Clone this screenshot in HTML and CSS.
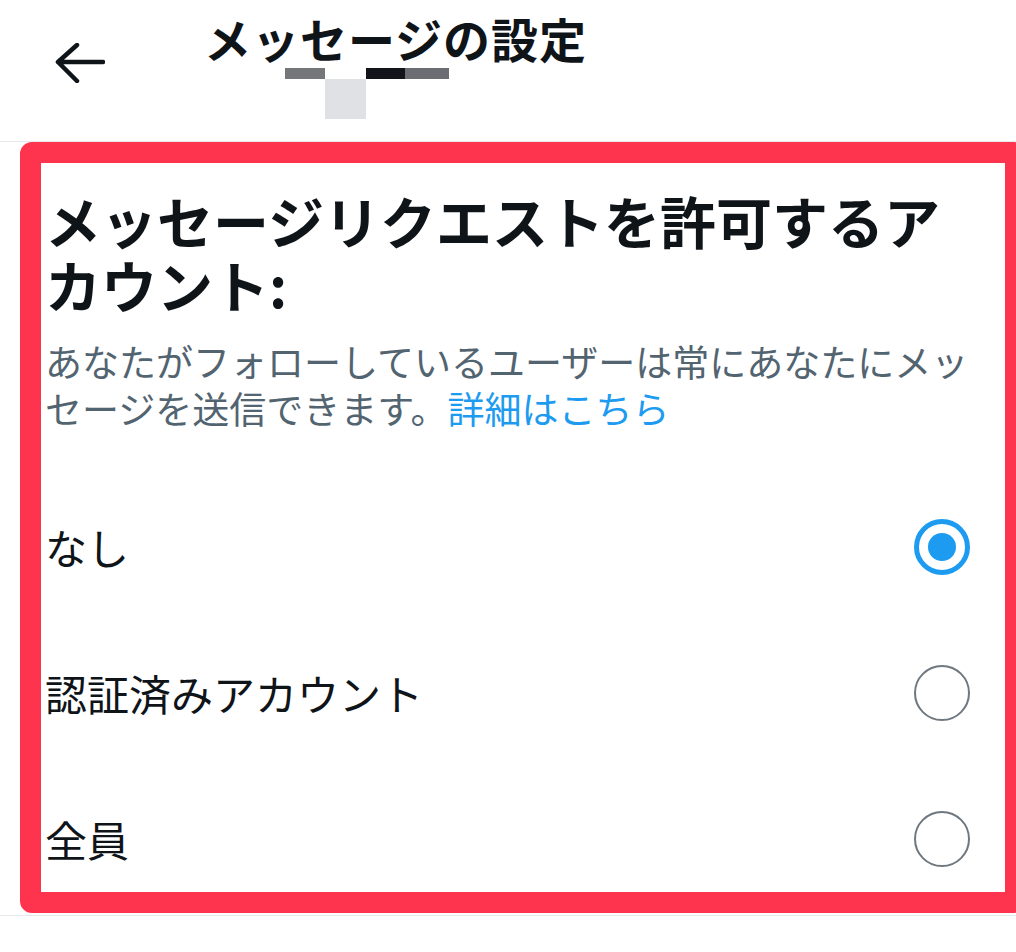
FILE: index.html
```html
<!DOCTYPE html>
<html lang="ja">
<head>
<meta charset="utf-8">
<title>メッセージの設定</title>
<link rel="stylesheet" href="styles.css">
</head>
<body>
<header class="topbar">
  <button class="back" aria-label="戻る">
    <svg width="50" height="40" viewBox="0 0 50 40"><path d="M3 19 H48 M22 2 L3 19 L22 38" fill="none" stroke="#0f1419" stroke-width="4.5" stroke-linecap="round" stroke-linejoin="round"/></svg>
  </button>
  <div class="title-wrap">
    <h1 class="title">メッセージの設定</h1>
    <div class="glitch">
      <span class="g g1"></span>
      <span class="g g2"></span>
      <span class="g g3"></span>
      <span class="g g4"></span>
    </div>
  </div>
</header>
<main class="frame">
  <section class="panel">
    <h2 class="heading">メッセージリクエストを許可するアカウント:</h2>
    <p class="desc">あなたがフォローしているユーザーは常にあなたにメッセージを送信できます。<a class="link" href="#">詳細はこちら</a></p>
    <ul class="options">
      <li class="option"><span class="label">なし</span><span class="radio checked"></span></li>
      <li class="option"><span class="label">認証済みアカウント</span><span class="radio"></span></li>
      <li class="option"><span class="label">全員</span><span class="radio"></span></li>
    </ul>
  </section>
</main>
<div class="bottom-line"></div>
</body>
</html>
```

FILE: styles.css
```css
html, body {
  margin: 0;
  padding: 0;
  background: #ffffff;
  overflow: hidden;
}
body {
  width: 1016px;
  font-family: "Noto Sans CJK JP", "Noto Sans", sans-serif;
  color: #0f1419;
}
.topbar {
  height: 141px;
  border-bottom: 1px solid #e7eaec;
  display: flex;
  align-items: flex-start;
  padding-left: 55px;
}
.back {
  margin-top: 43px;
  width: 50px;
  height: 40px;
  padding: 0;
  border: 0;
  background: none;
  display: block;
}
.back svg { display: block; }
.title-wrap {
  margin-left: 99px;
  margin-top: 14px;
  display: flex;
  flex-direction: column;
}
.title {
  margin: 0;
  font-size: 47px;
  line-height: 47px;
  font-weight: 700;
  letter-spacing: 1px;
}
.glitch {
  margin-top: 7px;
  margin-left: 81px;
  display: grid;
  grid-template-columns: 40px 41px 39px 44px;
  grid-template-rows: 11px 40px;
}
.g1 { grid-column: 1; grid-row: 1; background: #74767a; }
.g2 { grid-column: 3; grid-row: 1; background: #111418; }
.g3 { grid-column: 4; grid-row: 1; background: #6b6d72; }
.g4 { grid-column: 2; grid-row: 2; background: #dfe1e4; }

.frame {
  margin-left: 20px;
  width: 1006px;
  height: 771px;
  box-sizing: border-box;
  border: 21px solid #fe334e;
  border-radius: 12px;
  background: #ffffff;
}
.panel {
  padding: 25px 20px 0 4px;
}
.heading {
  margin: 0;
  font-size: 56px;
  line-height: 64px;
  font-weight: 700;
}
.desc {
  margin: 22px 0 0;
  font-size: 37px;
  line-height: 47px;
  color: #536471;
}
.link {
  color: #1d9bf0;
  text-decoration: none;
}
.options {
  list-style: none;
  margin: 65px 0 0;
  padding: 0;
  display: flex;
  flex-direction: column;
  gap: 46px;
}
.option {
  height: 100px;
  display: flex;
  align-items: center;
  justify-content: space-between;
}
.label {
  font-size: 42px;
  line-height: 50px;
}
.radio {
  width: 56px;
  height: 56px;
  margin-right: 15px;
  box-sizing: border-box;
  border: 2px solid #6f777f;
  border-radius: 50%;
  display: flex;
  align-items: center;
  justify-content: center;
}
.radio.checked {
  border: 5px solid #1d9bf0;
}
.radio.checked::after {
  content: "";
  width: 28px;
  height: 28px;
  border-radius: 50%;
  background: #1d9bf0;
}
.bottom-line {
  margin-top: 2px;
  height: 1px;
  background: #e7eaec;
}
```
